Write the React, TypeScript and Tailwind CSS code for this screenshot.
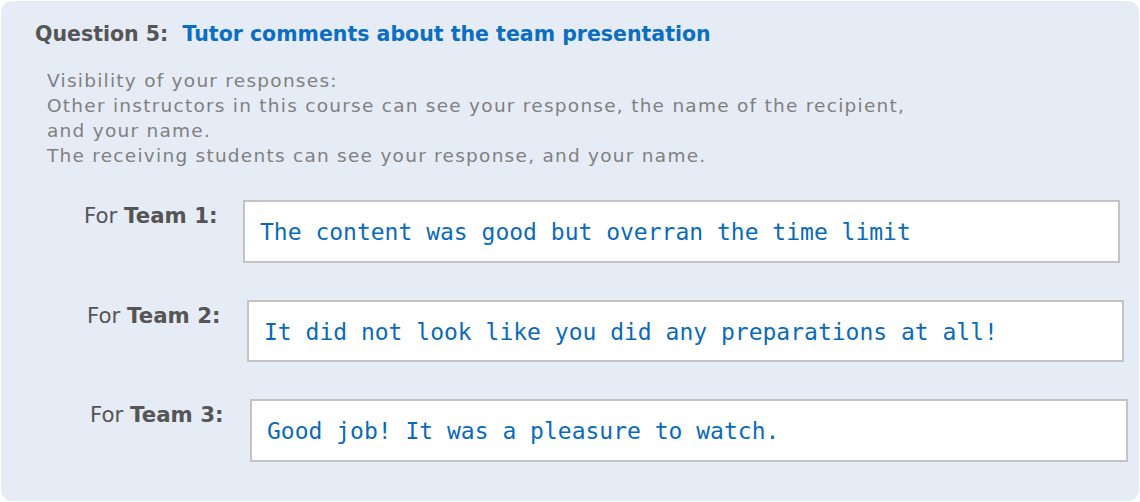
const rows = [
    { team: 'Team 1:', text: 'The content was good but overran the time limit', shift: 'pl-[83px]', label: 'w-[159px]', box: 'h-[63px] w-[877px]' },
    { team: 'Team 2:', text: 'It did not look like you did any preparations at all!', shift: 'pl-[86px]', label: 'w-[160px]', box: 'h-[62px] w-[877px]' },
    { team: 'Team 3:', text: 'Good job! It was a pleasure to watch.', shift: 'pl-[89px]', label: 'w-[160px]', box: 'h-[63px] w-[878px]' },
]

export default function App() {
    return (
        <div className="h-[502px] w-[1140px] bg-white p-px font-['DejaVu_Sans',sans-serif]">
            <div className="h-[500px] rounded-[11px] bg-[#e5ecf6] pt-[19px]">
                <h2 className="whitespace-pre pl-[34px] text-[20.5px] font-bold leading-[28px] text-[#555555]">
                    Question 5:{'  '}<span className="text-[#0b6ec0]">Tutor comments about the team presentation</span>
                </h2>

                <div className="mt-[20px] pl-[46px] text-[18.5px] leading-[25px] tracking-[1.25px] text-[#808080]">
                    <p>Visibility of your responses:</p>
                    <p>
                        Other instructors in this course can see your response, the name of the recipient,
                        <br />
                        and your name.
                    </p>
                    <p>The receiving students can see your response, and your name.</p>
                </div>

                <div className="mt-[32px] flex flex-col gap-[37px]">
                    {rows.map((row) => (
                        <div key={row.team} className={`flex items-start ${row.shift}`}>
                            <div className={`shrink-0 pt-[3px] text-[21.3px] leading-[26px] text-[#555555] ${row.label}`}>
                                For <span className="font-bold">{row.team}</span>
                            </div>
                            <div
                                className={`flex shrink-0 items-center border-2 border-[#c3c3c3] bg-white pl-[15px] pt-[2px] font-['DejaVu_Sans_Mono',monospace] text-[23px] text-[#0a6aba] ${row.box}`}
                            >
                                {row.text}
                            </div>
                        </div>
                    ))}
                </div>
            </div>
        </div>
    )
}
